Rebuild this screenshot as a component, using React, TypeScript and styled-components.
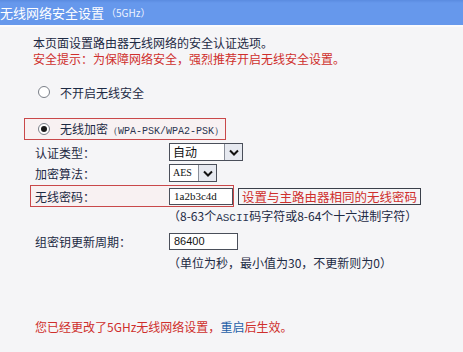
import styled, { createGlobalStyle } from "styled-components";

const GlobalStyle = createGlobalStyle`
  body {
    margin: 0;
    background: #f5f5f7;
    font-family: "Noto Sans CJK SC", "Liberation Sans", sans-serif;
    font-size: 12px;
    color: #1d2a44;
  }
`;

const Page = styled.div`
  width: 463px;
  height: 352px;
  overflow: hidden;
  background: #f5f5f7;
`;

const TitleBar = styled.div`
  height: 25px;
  background: linear-gradient(#5a8be0 0, #6698ec 3px, #6698ec 100%);
  border-bottom: 2px solid #fbfbfd;
  color: #fff;
  display: flex;
  align-items: center;
  font-size: 13px;
  white-space: nowrap;
`;

const TitleSub = styled.span`
  font-size: 10px;
  margin-left: 2px;
  color: #eef3ff;
`;

const Content = styled.div`
  padding-left: 33px;
`;

const Line = styled.div<{ $red?: boolean; $top?: number }>`
  height: 16px;
  line-height: 16px;
  margin-top: ${(p) => p.$top ?? 0}px;
  color: ${(p) => (p.$red ? "#cf2f2c" : "#1d2a44")};
  white-space: nowrap;
`;

const RadioRow = styled.div<{ $top: number; $indent?: number }>`
  display: flex;
  align-items: center;
  height: 16px;
  margin-top: ${(p) => p.$top}px;
  padding-left: ${(p) => p.$indent ?? 5}px;
  gap: 10px;
`;

const RedBox = styled.div<{ $left: number; $width: number; $top: number }>`
  box-sizing: border-box;
  margin-left: ${(p) => p.$left}px;
  width: ${(p) => p.$width}px;
  height: 22px;
  margin-top: ${(p) => p.$top}px;
  border: 1px solid #c9484a;
  background: #f8f1f2;
  display: flex;
  align-items: center;
`;

const Radio = styled.span<{ $checked?: boolean }>`
  box-sizing: border-box;
  width: 12px;
  height: 12px;
  border-radius: 50%;
  border: 1px solid #7a7f88;
  background: #fff;
  display: flex;
  align-items: center;
  justify-content: center;
  &::after {
    content: "";
    width: 6px;
    height: 6px;
    border-radius: 50%;
    background: ${(p) => (p.$checked ? "#1a1a1a" : "transparent")};
  }
`;

const Mono = styled.span<{ $size?: number }>`
  font-family: "Liberation Mono", monospace;
  font-size: ${(p) => p.$size ?? 10}px;
  color: #2a3550;
`;

const FormRow = styled.div<{ $top: number; $indent?: number }>`
  display: grid;
  grid-template-columns: 134px auto;
  align-items: center;
  height: 18px;
  margin-top: ${(p) => p.$top}px;
  padding-left: ${(p) => p.$indent ?? 2}px;
`;

const Label = styled.span`
  color: #1d2a44;
  white-space: nowrap;
`;

const Select = styled.div<{ $width: number }>`
  box-sizing: border-box;
  width: ${(p) => p.$width}px;
  height: 18px;
  border: 1px solid #4a4f5a;
  background: #fff;
  display: flex;
  align-items: stretch;
`;

const SelectText = styled.span<{ $small?: boolean }>`
  flex: 1;
  padding-left: 3px;
  line-height: 16px;
  font-size: ${(p) => (p.$small ? "10px" : "12px")};
  font-family: ${(p) =>
    p.$small ? '"Liberation Serif", serif' : '"Noto Sans CJK SC", sans-serif'};
  color: #111;
`;

const Arrow = styled.span`
  box-sizing: border-box;
  width: 18px;
  border-left: 1px solid #8a8f9a;
  background: #e6e9f0;
  display: flex;
  align-items: center;
  justify-content: center;
`;

const Input = styled.div<{ $width: number; $serif?: boolean }>`
  box-sizing: border-box;
  width: ${(p) => p.$width}px;
  height: 17px;
  border: 1px solid #4a4f5a;
  background: #fff;
  padding-left: 4px;
  line-height: 15px;
  font-size: 11px;
  font-family: ${(p) =>
    p.$serif ? '"Liberation Serif", serif' : '"Liberation Sans", sans-serif'};
  color: #111;
`;

const PassWrap = styled.div`
  position: relative;
`;

const Hint = styled.span`
  box-sizing: border-box;
  position: absolute;
  left: 205px;
  top: 3px;
  height: 17px;
  padding: 0 3px;
  border: 1px solid #3a3f4a;
  color: #cf2f2c;
  font-size: 12.5px;
  line-height: 15px;
  white-space: nowrap;
`;

const Note = styled.div<{ $top: number }>`
  margin-top: ${(p) => p.$top}px;
  padding-left: 135px;
  height: 14px;
  line-height: 14px;
  white-space: nowrap;
  color: #1d2a44;
`;

const Footer = styled.div`
  margin-top: 48px;
  padding-left: 2px;
  color: #cf2f2c;
  white-space: nowrap;
`;

const Link = styled.span`
  color: #1f5fa8;
`;

const Chevron = () => (
  <svg width="10" height="7" viewBox="0 0 10 7">
    <path d="M1 1.5 L5 5.5 L9 1.5" fill="none" stroke="#111" strokeWidth="2" />
  </svg>
);

export default function App() {
  return (
    <Page>
      <GlobalStyle />
      <TitleBar>
        无线网络安全设置<TitleSub>（5GHz）</TitleSub>
      </TitleBar>
      <Content>
        <Line $top={8}>本页面设置路由器无线网络的安全认证选项。</Line>
        <Line $red>安全提示：为保障网络安全，强烈推荐开启无线安全设置。</Line>
        <RadioRow $top={17}>
          <Radio />
          不开启无线安全
        </RadioRow>
        <RedBox $left={-9} $width={202} $top={18}>
          <RadioRow $top={0} $indent={13}>
            <Radio $checked />
            <span>
              无线加密<Mono>（WPA-PSK/WPA2-PSK）</Mono>
            </span>
          </RadioRow>
        </RedBox>
        <FormRow $top={3}>
          <Label>认证类型：</Label>
          <Select $width={74}>
            <SelectText>自动</SelectText>
            <Arrow>
              <Chevron />
            </Arrow>
          </Select>
        </FormRow>
        <FormRow $top={3}>
          <Label>加密算法：</Label>
          <Select $width={48}>
            <SelectText $small>AES</SelectText>
            <Arrow>
              <Chevron />
            </Arrow>
          </Select>
        </FormRow>
        <PassWrap>
          <RedBox $left={-3} $width={204} $top={3}>
            <FormRow $top={0} $indent={4}>
              <Label>无线密码：</Label>
              <Input $width={64} $serif>
                1a2b3c4d
              </Input>
            </FormRow>
          </RedBox>
          <Hint>设置与主路由器相同的无线密码</Hint>
        </PassWrap>
        <Note $top={2}>
          （8-63个<Mono $size={11}>ASCII</Mono>码字符或8-64个十六进制字符）
        </Note>
        <FormRow $top={9}>
          <Label>组密钥更新周期：</Label>
          <Input $width={69}>86400</Input>
        </FormRow>
        <Note $top={6}>（单位为秒，最小值为30，不更新则为0）</Note>
        <Footer>
          您已经更改了5GHz无线网络设置，<Link>重启</Link>后生效。
        </Footer>
      </Content>
    </Page>
  );
}
